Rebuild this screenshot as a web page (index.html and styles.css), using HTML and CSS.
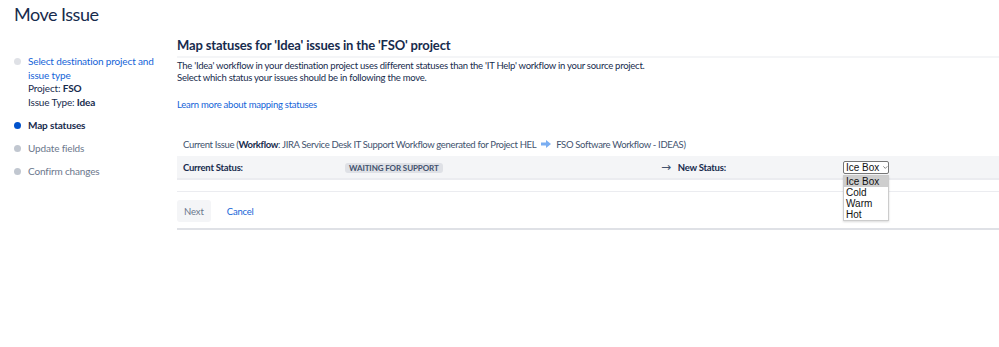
FILE: index.html
```html
<!DOCTYPE html>
<html lang="en">
<head>
    <meta charset="UTF-8">
    <title>Move Issue</title>
    <link rel="stylesheet" href="styles.css">
</head>
<body>
    <h1 class="page-title">Move Issue</h1>

    <div class="layout">
        <!-- Steps -->
        <ul class="steps">
            <li class="step done">
                <a href="#">Select destination project and issue type</a>
                <div class="step-meta">Project: <b>FSO</b></div>
                <div class="step-meta">Issue Type: <b>Idea</b></div>
            </li>
            <li class="step current">Map statuses</li>
            <li class="step">Update fields</li>
            <li class="step">Confirm changes</li>
        </ul>

        <!-- Main -->
        <div class="main">
            <h2 class="section-title">Map statuses for 'Idea' issues in the 'FSO' project</h2>
            <p class="intro">The 'Idea' workflow in your destination project uses different statuses than the 'IT Help' workflow in your source project.<br>Select which status your issues should be in following the move.</p>
            <a class="learn" href="#">Learn more about mapping statuses</a>

            <div class="workflow">
                Current Issue (<b>Workflow</b>: JIRA Service Desk IT Support Workflow generated for Project HEL
                <svg class="wf-arrow" width="10" height="8" viewBox="0 0 10 8"><path d="M0 2.5h5V0l5 4-5 4V5.5H0z" fill="#7aaef2"/></svg>
                FSO Software Workflow - IDEAS)
            </div>

            <div class="status-row">
                <div class="cell label">Current Status:</div>
                <div class="cell lozenge-cell"><span class="lozenge">WAITING FOR SUPPORT</span></div>
                <div class="cell label new-label"><span class="arrow">&rarr;</span> New Status:</div>
                <div class="cell select-cell">
                    <div class="select">Ice Box
                        <svg width="8" height="5" viewBox="0 0 8 5"><path d="M0.5 0.5l3.5 3.5 3.5-3.5" fill="none" stroke="#333" stroke-width="1"/></svg>
                    </div>
                    <ul class="options">
                        <li class="selected">Ice Box</li>
                        <li>Cold</li>
                        <li>Warm</li>
                        <li>Hot</li>
                    </ul>
                </div>
            </div>

            <div class="spacer"></div>

            <div class="buttons">
                <button class="btn">Next</button>
                <a class="cancel" href="#">Cancel</a>
            </div>
        </div>
    </div>
</body>
</html>
```

FILE: styles.css
```css
* {
    margin: 0;
    padding: 0;
    box-sizing: border-box;
}

body {
    font-family: Lato, sans-serif;
    color: #172b4d;
    background: #fff;
    font-size: 9.5px;
    letter-spacing: -0.25px;
}

a {
    color: #1464d8;
    text-decoration: none;
}

.page-title {
    font-size: 18px;
    font-weight: 400;
    letter-spacing: -0.5px;
    line-height: 24px;
    padding: 2px 0 0 14px;
    height: 48px;
}

.layout {
    display: flex;
}

/* Steps */
.steps {
    list-style: none;
    width: 177px;
    padding: 7px 0 0 14px;
    letter-spacing: -0.15px;
}

.step {
    position: relative;
    padding-left: 14px;
    font-size: 10px;
    line-height: 13.5px;
    color: #6b778c;
    margin-bottom: 9.5px;
}

.step::before {
    content: '';
    position: absolute;
    left: 0;
    top: 3px;
    width: 7px;
    height: 7px;
    border-radius: 50%;
    background: #c1c7d0;
}

.step.done::before {
    background: #dfe1e6;
}

.step.current {
    color: #172b4d;
    font-weight: 700;
}

.step.current::before {
    background: #0052cc;
}

.step-meta {
    color: #172b4d;
}

/* Main */
.main {
    flex: 1;
    margin-top: -12px;
}

.section-title {
    font-size: 13px;
    font-weight: 700;
    letter-spacing: -0.15px;
    line-height: 18px;
    padding-bottom: 2px;
    border-bottom: 2px solid #f4f5f7;
}

.intro {
    margin-top: 2px;
    line-height: 12px;
}

.learn {
    display: block;
    margin-top: 15px;
}

.workflow {
    margin-top: 28px;
    padding-left: 6px;
    line-height: 14px;
    letter-spacing: -0.33px;
    color: #42526e;
}

.workflow b {
    color: #172b4d;
}

.wf-arrow {
    margin: 0 3px;
}

.status-row {
    display: flex;
    align-items: center;
    height: 24px;
    margin-top: 4px;
    background: #f4f5f7;
    border-bottom: 2px solid #ebecf0;
}

.cell {
    padding-left: 6px;
}

.label {
    font-weight: 700;
    width: 162px;
}

.lozenge-cell {
    width: 319px;
}

.lozenge {
    display: inline-block;
    background: #dfe1e6;
    color: #42526e;
    font-size: 8px;
    font-weight: 700;
    letter-spacing: -0.1px;
    line-height: 10px;
    padding: 0 4px;
    border-radius: 3px;
}

.new-label {
    width: 185px;
    padding-left: 3px;
}

.arrow {
    font-family: 'DejaVu Sans', sans-serif;
    font-size: 12px;
    font-weight: 400;
    color: #42526e;
    margin-right: 5px;
}

.select-cell {
    position: relative;
    padding-left: 0;
}

.select {
    display: flex;
    align-items: center;
    gap: 4px;
    width: 46px;
    height: 13px;
    padding-left: 2px;
    white-space: nowrap;
    font-family: 'Liberation Sans', sans-serif;
    font-size: 10px;
    letter-spacing: 0;
    color: #111;
    background: #fff;
    border: 1px solid #767676;
    border-radius: 2px;
}

.options {
    position: absolute;
    top: 14px;
    left: 0;
    width: 46px;
    list-style: none;
    background: #fff;
    border: 1px solid #ccc;
    box-shadow: 0 1px 2px rgba(0,0,0,0.15);
    font-family: 'Liberation Sans', sans-serif;
    font-size: 10px;
    letter-spacing: 0;
    color: #111;
    z-index: 2;
}

.options li {
    padding-left: 2px;
    line-height: 11px;
}

.options .selected {
    background: #cecece;
}

.spacer {
    height: 12px;
    border-bottom: 1px solid #ebecf0;
}

.buttons {
    display: flex;
    align-items: center;
    gap: 16px;
    padding: 8px 0 6px;
    border-bottom: 2px solid #dfe1e6;
}

.btn {
    font-family: inherit;
    font-size: 9.5px;
    letter-spacing: -0.1px;
    color: #6b778c;
    background: #f4f5f7;
    border: none;
    border-radius: 3px;
    height: 22px;
    padding: 0 7px;
}
```
